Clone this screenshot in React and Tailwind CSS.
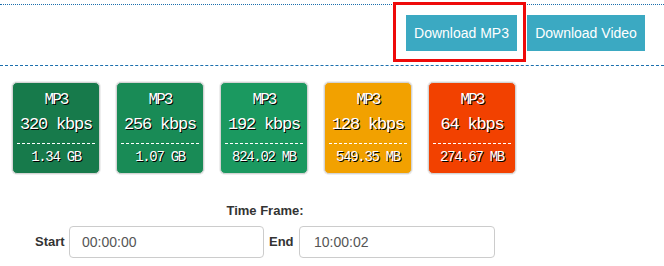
import React from "react";

const cards = [
  { kbps: "320 kbps", size: "1.34 GB", bg: "bg-[#177a4b]" },
  { kbps: "256 kbps", size: "1.07 GB", bg: "bg-[#198b56]" },
  { kbps: "192 kbps", size: "824.02 MB", bg: "bg-[#1b9960]" },
  { kbps: "128 kbps", size: "549.35 MB", bg: "bg-[#f2a100]" },
  { kbps: "64 kbps", size: "274.67 MB", bg: "bg-[#f24100]" },
];

export default function App() {
  return (
    <div className="w-[664px] h-[266px] bg-white overflow-hidden font-['Liberation_Sans',Arial,sans-serif]">
      <div className="pt-[4px]">
        <div className="border-t border-dotted border-[#1b6fad] pt-[10px] pb-[14px] pr-[19px] flex justify-end gap-[10px]">
          <div className="relative">
            <div className="absolute left-[-13px] top-[-13px] right-[-9px] bottom-[-11px] border-[3px] border-[#ee0a0a]"></div>
            <button className="w-[111px] h-[36px] bg-[#3ba9c2] text-white text-[14px] leading-[36px] text-center">
              Download MP3
            </button>
          </div>
          <button className="w-[118px] h-[36px] bg-[#3ba9c2] text-white text-[14px] leading-[36px] text-center">
            Download Video
          </button>
        </div>
        <div className="border-t border-dashed border-[#1b6fad]"></div>
      </div>

      <div className="flex gap-[16px] pl-[12px] mt-[16px]">
        {cards.map((c, i) => (
          <div
            key={i}
            className={`w-[88px] h-[92px] ${c.bg} rounded-[5px] border border-[#d4d4d4] shadow-[0_0_0_1px_#eeeeee] flex flex-col items-center text-white font-['Liberation_Mono',monospace] [text-shadow:1px_1px_0_#000]`}
          >
            <div className="mt-[7px] text-[16px] leading-[20px] tracking-[-2px]">MP3</div>
            <div className="mt-[3px] text-[17px] leading-[24px] tracking-[-1.2px]">{c.kbps}</div>
            <div className="mt-[6px] self-stretch mx-[4px] border-t border-dashed border-white"></div>
            <div className="mt-[4px] text-[14px] leading-[18px] tracking-[-1.3px]">{c.size}</div>
          </div>
        ))}
      </div>

      <div className="ml-[35px] w-[460px] mt-[29px]">
        <div className="text-center text-[13px] leading-[16px] font-bold text-[#333]">Time Frame:</div>
        <div className="mt-[7px] flex items-center">
          <span className="w-[30px] text-[13px] font-bold text-[#333]">Start</span>
          <input
            readOnly
            value="00:00:00"
            className="ml-[4px] w-[195px] h-[32px] border border-[#cccccc] rounded-[4px] px-[12px] text-[14px] text-[#555]"
          />
          <span className="ml-[5px] w-[26px] text-[13px] font-bold text-[#333]">End</span>
          <input
            readOnly
            value="10:00:02"
            className="ml-[4px] w-[196px] h-[32px] border border-[#cccccc] rounded-[4px] px-[14px] text-[14px] text-[#555]"
          />
        </div>
      </div>
    </div>
  );
}
